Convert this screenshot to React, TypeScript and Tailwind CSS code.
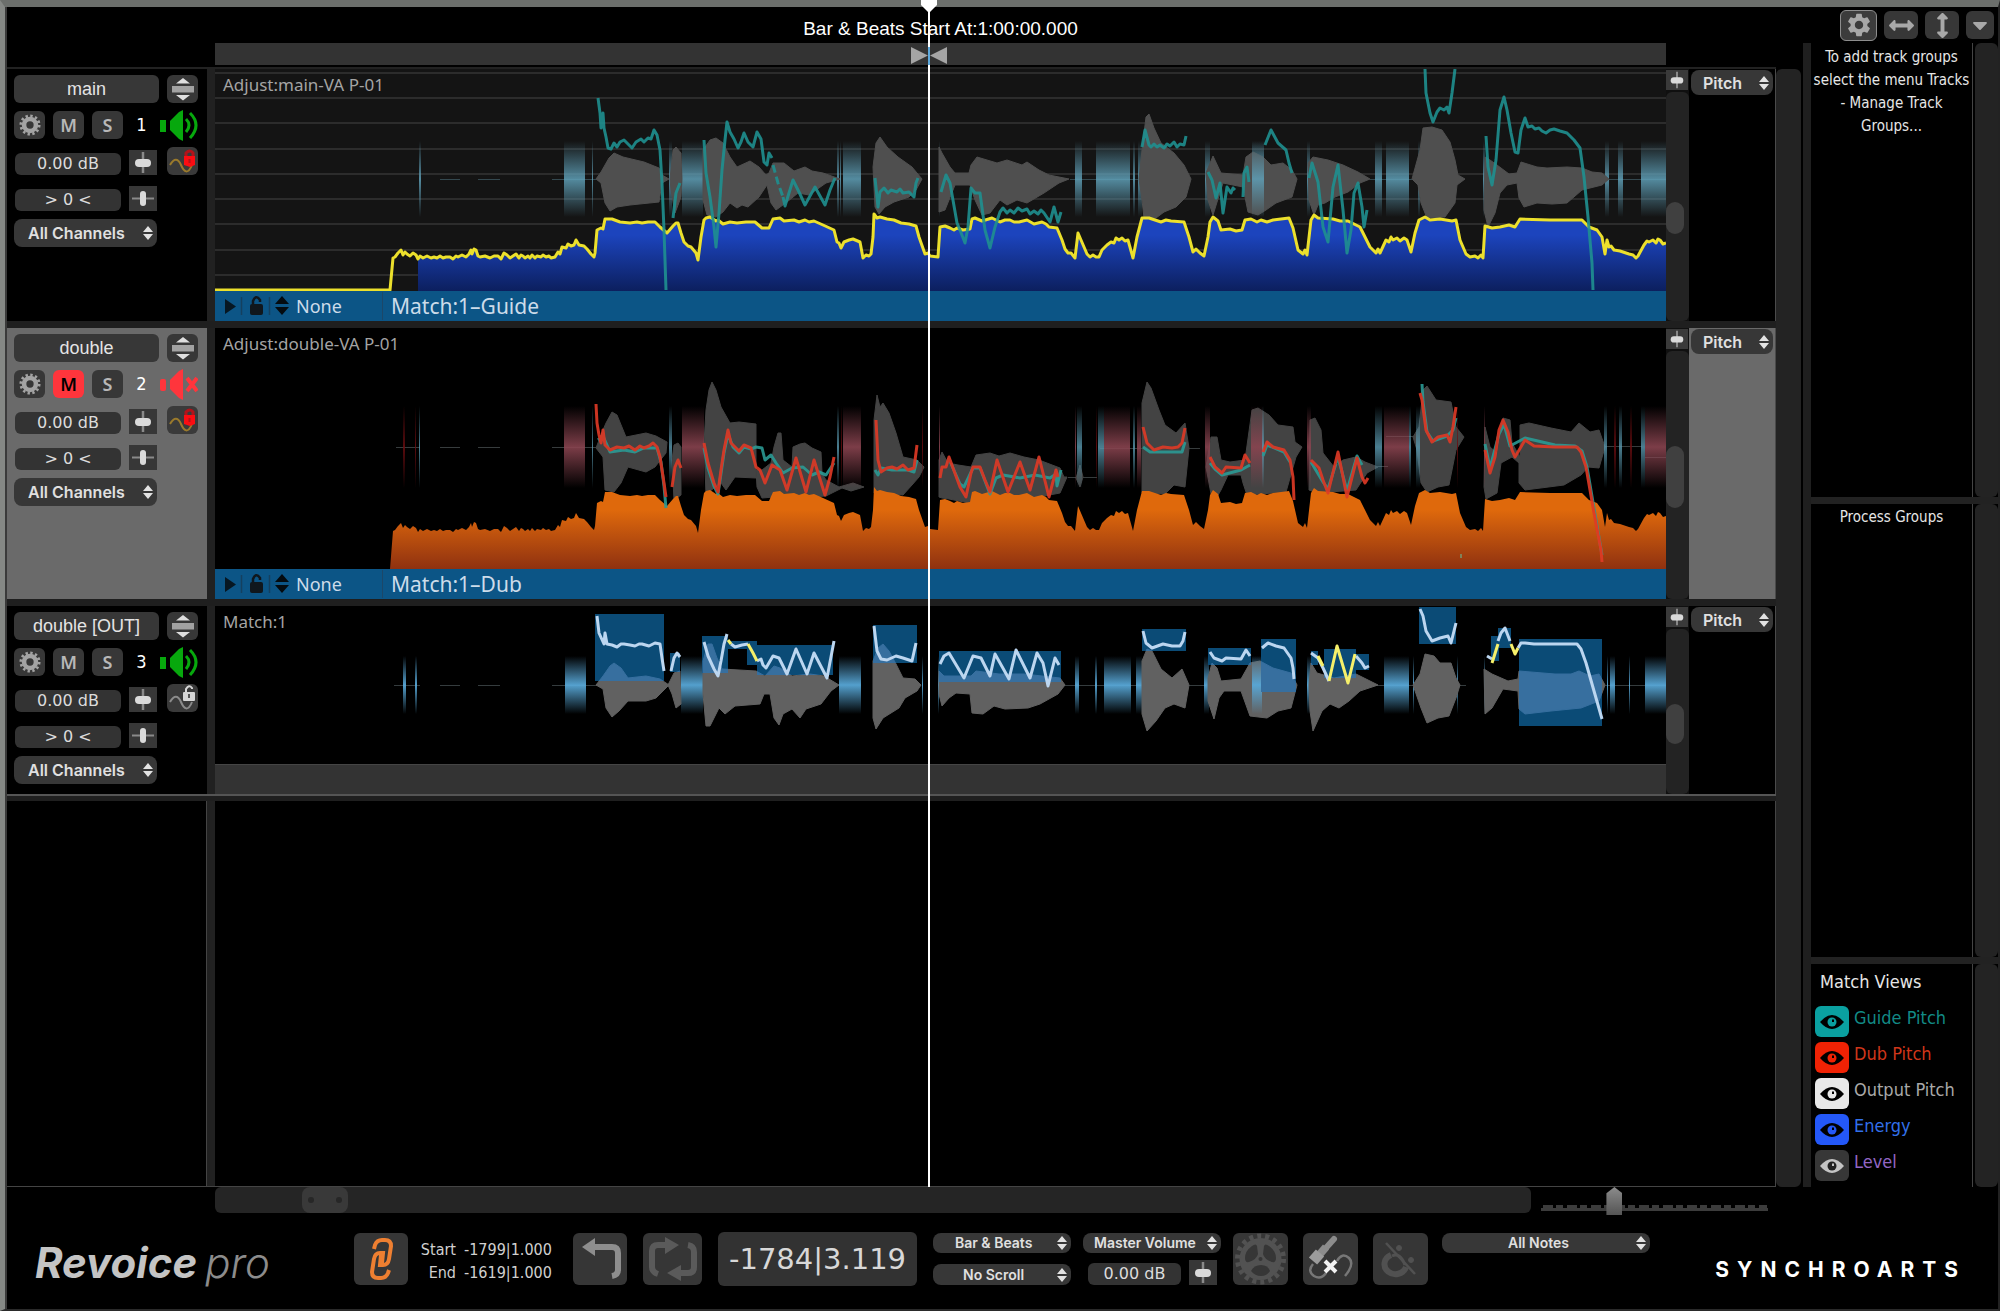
import React from "react";
import { FaArrowsAltH, FaArrowsAltV, FaCaretDown } from "react-icons/fa";
import { MdSettings } from "react-icons/md";

const uiFont = "font-['DejaVu_Sans_Condensed','DejaVu_Sans',sans-serif]";
const numFont = "font-['DejaVu_Sans',sans-serif]";
const labelFont = "font-['Noto_Sans',sans-serif]";
const boldFont = "font-['Inter',sans-serif]";

// Energy contour shared by the guide (line + fill) and the dub (fill)
const ENERGY =
  "393,258 395,257 398,253 401,250 403,255 405,252 407,254 410,256 413,253 416,255 418,259 420,256 423,258 427,256 431,258 434,257 437,258 440,256 443,258 446,257 450,257 453,259 456,256 458,257 462,255 466,257 469,254 471,250 472,254 474,249 476,250 478,256 480,257 485,256 490,258 494,256 498,256 501,259 504,253 507,255 510,258 513,256 516,254 519,258 521,255 523,256 525,258 528,256 530,258 532,255 535,258 537,256 541,257 543,255 546,257 549,256 551,258 555,257 558,252 560,254 562,247 566,248 568,244 571,246 574,245 576,240 579,245 584,246 587,249 591,254 594,257 595,253 597,230 601,228 603,229 605,219 612,219 620,222 630,223 637,222 642,223 648,222 655,222 660,227 667,233 673,226 676,223 678,223 681,233 684,242 688,246 691,247 696,253 698,260 701,237 704,220 706,218 710,217 716,221 718,220 723,224 730,222 737,223 746,222 755,222 762,228 769,228 773,219 780,218 784,221 794,220 799,222 805,220 809,222 814,221 823,225 834,230 837,242 839,243 841,248 844,242 849,240 853,239 860,242 863,258 866,255 869,256 871,254 873,237 874,214 877,218 880,217 887,219 894,220 901,223 909,224 916,226 919,237 925,254 928,253 930,256 938,257 940,227 945,226 950,228 954,230 957,228 963,230 970,229 972,219 975,218 982,221 992,218 1000,222 1005,220 1010,220 1014,222 1019,222 1027,220 1034,224 1042,222 1046,224 1049,227 1057,228 1062,240 1065,249 1068,253 1071,253 1075,258 1078,233 1087,254 1090,257 1093,255 1096,257 1099,257 1102,250 1107,245 1111,242 1114,243 1116,238 1119,240 1122,238 1125,241 1128,240 1133,258 1137,237 1142,218 1149,218 1155,220 1161,222 1166,220 1171,221 1184,222 1189,237 1193,252 1196,249 1200,253 1204,256 1208,237 1210,222 1213,217 1218,221 1221,230 1230,229 1236,231 1242,230 1245,220 1251,219 1257,222 1261,220 1267,222 1273,220 1289,218 1293,228 1298,250 1303,254 1305,250 1307,255 1311,220 1314,215 1318,218 1333,219 1340,221 1348,221 1360,227 1365,237 1370,247 1376,253 1378,249 1380,253 1386,240 1389,242 1391,237 1393,240 1397,238 1400,241 1404,238 1407,240 1411,252 1415,233 1419,220 1425,217 1430,220 1440,219 1452,221 1456,220 1460,240 1466,254 1470,257 1475,256 1478,258 1481,255 1483,258 1485,226 1492,228 1500,227 1509,225 1515,227 1520,219 1550,220 1582,220 1589,227 1597,230 1602,237 1605,254 1607,240 1609,247 1611,246 1614,250 1620,251 1629,254 1633,255 1636,258 1638,256 1644,245 1647,241 1649,242 1653,240 1656,243 1658,239 1660,240 1663,244 1666,243";

const GUIDE_WAVES = [
  "596,179 601,172 609,158 614,153 623,157 644,162 659,168 662,175 669,179 662,183 659,202 630,205 617,207 610,211 605,203 601,183",
  "670,179 673,150 676,147 681,153 682,179 681,197 675,213 671,190",
  "703,150 710,140 716,138 723,143 730,157 737,167 750,161 759,167 766,175 769,173 773,163 784,163 794,171 805,167 812,171 823,173 840,179 826,183 809,195 798,193 787,202 776,210 771,203 767,185 759,197 748,207 742,205 737,208 730,203 723,212 716,217 707,215 703,200",
  "873,167 876,143 880,137 887,147 898,157 912,167 917,173 922,179 916,190 909,197 894,202 885,207 879,214 875,207",
  "939,147 942,153 950,167 955,173 969,173 971,165 977,157 997,163 1007,160 1022,165 1027,162 1039,170 1049,175 1069,179 1059,183 1044,193 1027,203 1017,200 1007,205 1000,200 990,213 982,215 975,200 970,185 955,185 945,210 939,212",
  "1139,179 1142,150 1146,117 1149,114 1154,128 1161,143 1174,153 1184,165 1189,175 1191,179 1186,197 1176,207 1164,212 1156,218 1144,218 1142,200",
  "1206,173 1213,156 1221,173 1243,175 1246,157 1253,152 1263,157 1271,165 1283,163 1292,170 1297,179 1292,197 1276,203 1266,210 1258,215 1248,212 1243,187 1223,183 1213,215 1208,200",
  "1308,163 1313,157 1328,160 1343,165 1358,172 1370,179 1360,183 1348,192 1335,197 1325,203 1318,205 1314,215 1309,200",
  "1412,179 1420,150 1423,128 1432,127 1442,130 1450,142 1455,160 1458,175 1465,179 1457,185 1455,203 1445,217 1427,218 1421,203 1418,185",
  "1485,157 1490,160 1497,165 1509,174 1517,173 1521,162 1537,167 1547,168 1567,167 1582,168 1592,172 1602,173 1609,179 1602,185 1582,190 1567,203 1552,204 1537,203 1524,207 1519,198 1517,183 1507,185 1500,193 1495,213 1488,227 1484,210",
];

const GUIDE_PITCH = [
  "598,98 600,113 601,128 603,113 604,128 606,137 608,148 611,149 614,143 617,147 620,142 624,140 628,144 632,148 636,142 641,139 644,142 648,138 651,139 654,130 657,135 660,150 662,183 664,230 666,290",
  "673,218 676,193 680,183",
  "704,140 706,173 710,197 714,227 716,247 719,213 722,170 725,140 727,122 730,132 734,139 738,148 741,142 744,133 748,142 753,147 757,132 761,139 764,162 767,165 769,153 772,158",
  "783,197 785,206 793,180 799,192 805,205 815,187 825,205 830,190 835,178",
  "875,178 878,207 880,192 884,188 888,193 891,190 897,192 900,189 903,193 909,192 914,197 916,183 918,178",
  "941,192 946,175 950,183 957,223 960,230 965,243 968,227 971,188 975,193 980,193 985,230 990,248 995,227 1000,212 1003,208 1007,213 1010,210 1014,213 1018,208 1022,211 1027,209 1030,214 1034,211 1038,214 1041,210 1044,213 1050,222 1054,207 1058,222 1061,212",
  "1142,147 1145,130 1149,145 1151,147 1154,144 1157,147 1160,145 1164,148 1167,144 1170,146 1174,142 1177,147 1180,144 1184,145 1186,136",
  "1208,172 1212,180 1216,198 1220,183 1223,213 1227,187 1231,193 1233,188 1235,190",
  "1243,197 1244,173 1247,167 1249,182",
  "1265,145 1271,130 1278,143 1286,150 1289,163 1292,173",
  "1309,178 1312,163 1318,182 1323,227 1328,242 1333,187 1338,165 1343,210 1347,253 1351,230 1354,193 1358,183 1362,207 1364,227 1367,210",
  "1425,69 1426,93 1430,113 1433,122 1437,112 1440,108 1444,110 1447,107 1449,113 1452,93 1455,69",
  "1486,136 1488,167 1492,185 1496,160 1500,110 1504,97 1507,110 1511,133 1515,152 1518,153 1521,130 1525,118 1528,127 1532,126 1535,129 1539,128 1542,131 1546,133 1550,130 1554,129 1560,131 1567,133 1574,140 1580,148 1584,177 1588,217 1592,263 1593,290",
];

const DUB_WAVES = [
  "596,448 603,430 606,423 612,412 617,415 626,437 646,433 656,436 667,442 666,453 655,467 646,472 628,467 621,483 614,492 605,490 603,457",
  "672,460 674,445 678,443 681,447 681,495 674,500",
  "704,443 706,410 709,390 712,382 716,390 721,407 730,423 739,422 756,424 756,478 735,477 726,490 721,483 706,494",
  "756,470 762,470 771,463 774,447 778,433 781,433 783,460 792,467 793,447 800,444 805,443 812,448 821,452 822,473 826,480 839,487 853,483 864,487 851,491 842,488 826,496 810,497 774,497 762,498 757,487",
  "874,493 874,420 877,395 880,407 883,403 889,413 896,433 903,457 917,460 924,467 919,477 912,485 903,495",
  "939,497 939,460 942,452 948,463 958,465 971,467 976,455 990,453 999,456 1010,453 1024,457 1039,460 1060,468 1064,477 1067,477 1060,493 1039,497 974,497 969,503 949,499 942,498",
  "1076,478 1080,465 1083,477 1080,487",
  "1142,493 1142,403 1147,382 1151,388 1159,410 1165,425 1176,433 1185,423 1189,448 1185,487 1174,485 1165,494",
  "1206,467 1211,437 1217,437 1221,460 1230,462 1245,460 1252,410 1258,408 1269,415 1278,425 1293,427 1295,442 1302,447 1296,457 1286,492 1247,495 1243,483 1241,475 1228,475 1221,490 1217,497 1211,494",
  "1309,490 1310,420 1315,418 1321,430 1323,453 1334,467 1343,460 1356,457 1365,462 1378,467 1367,473 1356,490 1317,493",
  "1413,437 1419,427 1423,390 1427,386 1436,400 1451,402 1456,427 1464,437 1456,450 1449,485 1438,487 1427,492 1421,483 1417,450",
  "1484,487 1485,427 1490,447 1497,453 1501,427 1503,418 1510,420 1512,443 1520,457 1520,425 1529,423 1551,428 1571,432 1579,423 1590,432 1599,430 1605,447 1599,468 1588,467 1581,475 1564,485 1525,490 1519,483 1519,463 1512,457 1501,463 1497,493 1486,499",
];

const DUB_PITCH = [
  "596,404 597,423 599,435 601,443 603,430 605,445 610,450 617,447 624,448 629,446 635,450 640,446 644,448 649,446 653,443 657,447 660,457 664,483 666,497",
  "672,487 675,467 678,460 681,468",
  "704,443 708,463 714,483 718,492 721,470 724,450 728,430 731,443 739,451 744,445 751,448 756,467 760,470 765,483 772,465 780,470 787,490 796,458 806,492 814,460 825,495 830,477 834,457",
  "876,420 878,460 881,472 887,468 892,467 897,469 903,465 908,470 914,468 917,445",
  "940,478 942,467 946,467 949,457 953,468 960,487 966,497 971,473 973,467 980,467 985,480 990,492 997,460 1008,492 1020,462 1030,490 1039,457 1049,497 1056,470 1058,477",
  "1143,427 1147,443 1154,450 1163,447 1172,448 1178,447 1182,443 1185,428",
  "1210,457 1215,467 1222,473 1226,467 1241,468 1245,455 1250,463",
  "1263,452 1267,442 1273,447 1284,450 1290,460 1293,477 1294,500",
  "1311,460 1319,468 1323,480 1328,493 1338,452 1347,497 1357,458 1362,477 1365,483 1368,478",
  "1420,393 1422,400 1426,430 1432,442 1438,437 1447,435 1450,442 1453,427 1456,407",
  "1485,450 1490,473 1495,457 1499,430 1503,420 1508,432 1512,450 1515,457 1525,440 1534,446 1555,447 1577,447 1581,452 1586,467 1594,513 1601,550 1602,562",
];

const DUB_GUIDE_PITCH = [
  "598,440 603,436 610,452 624,450 635,452 644,448 657,448 661,462 664,486 666,508",
  "704,448 708,468 714,486 718,494 724,453 728,434 733,447 739,453 744,447 751,449 756,447 762,448 765,460 771,455 776,463 783,473 792,468 803,467 812,475 819,472 826,475 834,463",
  "875,470 878,475 881,468 892,470 908,470 914,472 917,460",
  "949,459 960,484 964,487 973,468 980,468 990,494 996,478 1003,475 1020,478 1035,475 1050,478 1056,474 1057,486 1061,470",
  "1143,447 1150,452 1163,452 1182,452 1185,442",
  "1210,463 1215,469 1222,475 1241,470 1250,465",
  "1263,456 1267,445 1284,452 1290,462",
  "1311,462 1323,482 1328,489 1338,457 1347,491 1357,456 1362,465",
  "1422,384 1423,402 1427,432 1433,441 1447,436 1453,430 1456,418",
  "1485,444 1490,468 1499,434 1504,424 1510,446 1525,438 1555,445 1575,446 1582,451 1587,467 1602,555",
];

const OUT_WAVES = [
  "596,684 603,675 610,665 614,662 621,667 628,677 646,675 660,678 669,684 656,697 646,700 628,700 619,710 612,716 606,707 603,688",
  "668,684 674,672 680,670 681,703 676,707 672,693",
  "703,660 708,643 712,643 717,657 722,668 756,670 765,675 774,665 780,667 792,675 810,673 824,675 839,684 831,690 821,703 806,708 800,717 792,708 783,713 779,724 774,717 770,693 764,693 760,703 735,705 725,713 719,707 710,725 706,725 703,693",
  "873,660 878,647 883,643 889,650 896,663 903,677 915,678 921,684 917,690 905,697 899,707 883,717 876,728 873,717",
  "939,670 944,675 971,675 976,670 999,673 1024,673 1060,677 1065,684 1058,693 1040,703 1028,707 1005,708 994,705 983,713 972,712 970,693 956,692 949,697 942,705 939,693",
  "1142,660 1147,648 1152,650 1161,668 1172,677 1182,668 1189,684 1185,707 1174,703 1165,707 1156,720 1147,730 1142,713",
  "1208,677 1212,662 1217,667 1221,680 1241,678 1250,662 1260,660 1273,667 1291,672 1297,684 1291,707 1278,710 1267,717 1250,715 1241,690 1224,690 1219,697 1214,718 1208,700",
  "1309,684 1311,662 1317,672 1334,677 1356,673 1378,684 1360,690 1349,700 1339,707 1330,703 1322,710 1313,730 1310,710",
  "1413,684 1420,673 1425,653 1434,655 1440,662 1451,662 1456,677 1460,684 1456,697 1449,715 1438,717 1427,722 1421,707",
  "1484,668 1492,673 1508,680 1518,678 1519,670 1555,673 1571,673 1579,670 1590,675 1599,673 1605,684 1599,700 1581,707 1551,710 1525,713 1519,708 1518,690 1503,688 1492,707 1485,713",
];

const OUT_PITCH = [
  "597,615 599,632 604,643 605,632 607,643 612,644 617,646 621,643 624,643 630,644 635,645 639,643 642,643 649,645 655,642 660,643 662,657 664,670",
  "671,670 674,657 677,652 680,656",
  "704,641 708,655 714,668 718,675 721,660 724,643 727,633",
  "731,643 735,646 742,644 748,643",
  "757,660 761,658 763,664 766,667 773,655 779,657 787,673 796,648 807,673 814,652 827,677 834,640",
  "874,625 877,650 881,658 887,659 896,655 903,657 912,660 916,642",
  "940,663 944,655 949,652 964,677 973,655 981,657 990,675 995,653 1009,678 1016,649 1030,677 1037,652 1043,662 1048,685 1055,657 1059,664",
  "1143,630 1146,642 1152,647 1163,643 1172,645 1180,645 1183,640 1185,631",
  "1210,651 1214,657 1222,660 1226,657 1241,658 1246,649 1250,655",
  "1262,647 1268,642 1276,645 1284,647 1291,657 1293,667 1294,678",
  "1311,652 1318,657 1323,667 1329,680",
  "1356,655 1362,662 1365,667 1369,665",
  "1420,608 1423,615 1426,630 1432,640 1440,637 1448,635 1451,642 1456,622",
  "1487,655 1492,658",
  "1498,640 1501,632 1505,627 1510,640",
  "1518,647 1521,642 1525,642 1534,643 1577,643 1581,648 1586,662 1602,718",
];

const OUT_EDITED = [
  "728,639 731,643",
  "748,643 753,652 757,660",
  "1318,655 1323,665",
  "1329,680 1337,645 1348,682 1355,653",
  "1492,662 1498,643",
  "1511,643 1515,653 1518,647",
];

// x1, y1, x2, y2
const NOTE_BOXES = [
  [595, 613, 664, 680],
  [670, 652, 680, 671],
  [702, 635, 728, 672],
  [728, 640, 747, 648],
  [747, 640, 757, 664],
  [757, 644, 833, 674],
  [873, 624, 917, 662],
  [939, 650, 1061, 681],
  [1142, 628, 1186, 650],
  [1208, 647, 1251, 664],
  [1261, 638, 1296, 691],
  [1311, 650, 1318, 664],
  [1324, 648, 1356, 677],
  [1356, 653, 1369, 669],
  [1419, 606, 1456, 643],
  [1491, 635, 1499, 660],
  [1498, 627, 1511, 647],
  [1519, 638, 1602, 725],
];

// unvoiced regions: x, width
const GUIDE_BARS = [
  [419, 2], [564, 21], [592, 1], [669, 3], [682, 21], [837, 2], [840, 1], [843, 18], [939, 1],
  [1075, 7], [1096, 34], [1133, 2], [1138, 4], [1205, 5], [1252, 12], [1307, 3], [1375, 7],
  [1386, 23], [1418, 2], [1483, 2], [1605, 4], [1618, 5], [1641, 25],
];
const DUB_RED_BARS = [
  [564, 21], [682, 22], [843, 18], [939, 1], [1075, 1], [1104, 26], [1137, 4], [1205, 5],
  [1251, 12], [1307, 4], [1384, 25], [1484, 1], [1645, 21],
];
const DUB_DARK_BARS = [
  [403, 2], [415, 1], [841, 1], [922, 1], [1096, 1], [1457, 1], [1614, 2], [1630, 2],
];
const DUB_BLUE_BARS = [
  [419, 1], [592, 1], [669, 3], [837, 2], [1077, 5], [1098, 6], [1133, 2], [1262, 2], [1375, 7],
  [1409, 2], [1416, 4], [1604, 3], [1619, 3], [1641, 4],
];
const OUT_BARS = [
  [403, 3], [415, 2], [565, 21], [681, 22], [839, 22], [922, 1], [938, 1], [1075, 4], [1095, 2],
  [1104, 27], [1136, 6], [1204, 5], [1252, 10], [1307, 4], [1384, 25], [1413, 1], [1457, 1],
  [1484, 1], [1607, 1], [1610, 5], [1629, 1], [1645, 21],
];

const Bars = ({ data, y, h, fill }: { data: number[][]; y: number; h: number; fill: string }) => (
  <g fill={`url(#${fill})`}>
    {data.map(([x, w]) => (
      <rect key={x} x={x} y={y} width={w} height={h} />
    ))}
  </g>
);

const Waves = ({ data, fill }: { data: string[]; fill: string }) => (
  <g fill={fill} stroke={fill} strokeWidth="1" strokeLinejoin="round">
    {data.map((p) => (
      <polygon key={p} points={p} />
    ))}
  </g>
);

const Lines = ({ data, stroke, width = 3 }: { data: string[]; stroke: string; width?: number }) => (
  <g fill="none" stroke={stroke} strokeWidth={width} strokeLinejoin="round">
    {data.map((p) => (
      <polyline key={p} points={p} />
    ))}
  </g>
);

const Fade = ({ id, color, peak = 0.85 }: { id: string; color: string; peak?: number }) => (
  <linearGradient id={id} x1="0" y1="0" x2="0" y2="1">
    <stop offset="0" stopColor={color} stopOpacity="0" />
    <stop offset="0.5" stopColor={color} stopOpacity={peak} />
    <stop offset="1" stopColor={color} stopOpacity="0" />
  </linearGradient>
);

const GuidePlot = () => (
  <svg viewBox="215 69 1451 222" preserveAspectRatio="none" className="block h-[222px] w-full bg-[#141414]">
    <defs>
      <Fade id="guideBar" color="#5fa0b8" />
      <linearGradient id="energyBlue" gradientUnits="userSpaceOnUse" x1="0" y1="235" x2="0" y2="291">
        <stop offset="0" stopColor="#1c44bd" />
        <stop offset="1" stopColor="#0c1f5e" />
      </linearGradient>
    </defs>
    {[72, 97, 122, 148, 173, 198, 223, 249, 274].map((y) => (
      <rect key={y} x="215" y={y} width="1451" height="2" fill="#2c2c2c" />
    ))}
    <path d="M440 179.500H460M478 179.500H500M552 179.500H596M1070 179.500H1140M1370 179.500H1415M1609 179.500H1666" stroke="#5b8796" strokeOpacity="0.45" />
    <Bars data={GUIDE_BARS} y={141} h={76} fill="guideBar" />
    <Waves data={GUIDE_WAVES} fill="#4f4f4f" />
    <rect x="1252" y="141" width="12" height="76" fill="url(#guideBar)" />
    <svg x="418" y="69" width="1248" height="222" viewBox="418 69 1248 222">
      <polygon points={`390,291 ${ENERGY} 1666,291`} fill="url(#energyBlue)" />
    </svg>
    <Lines data={[`215,290 390,290 ${ENERGY}`]} stroke="#ece02c" />
    <g opacity="0.9">
      <Lines data={GUIDE_PITCH} stroke="#1f9090" />
      <polyline points="773,165 778,183 783,197" fill="none" stroke="#1f9090" strokeWidth="3" strokeDasharray="8 4" />
    </g>
  </svg>
);

const DubPlot = () => (
  <svg viewBox="215 328 1451 241" preserveAspectRatio="none" className="block h-[241px] w-full bg-black">
    <defs>
      <Fade id="dubRed" color="#8a4450" peak={0.9} />
      <Fade id="dubDark" color="#6a0d10" />
      <Fade id="dubBlue" color="#5794aa" />
      <linearGradient id="energyOrange" gradientUnits="userSpaceOnUse" x1="0" y1="237" x2="0" y2="296">
        <stop offset="0" stopColor="#df690c" />
        <stop offset="1" stopColor="#8f3110" />
      </linearGradient>
    </defs>
    <path d="M396 447.500H420M440 447.500H460M478 447.500H500M552 447.500H596M1068 477.500H1097M1100 448.500H1142M1189 448.500H1200M1378 466.500H1388M1386 436.500H1415M1605 446.500H1642M1645 457.500H1666" stroke="#6d7779" strokeOpacity="0.5" />
    <Waves data={DUB_WAVES} fill="#434343" />
    <Bars data={DUB_RED_BARS} y={406} h={82} fill="dubRed" />
    <Bars data={DUB_DARK_BARS} y={406} h={82} fill="dubDark" />
    <Bars data={DUB_BLUE_BARS} y={406} h={82} fill="dubBlue" />
    <g transform="translate(0 273)">
      <polygon points={`390,296 ${ENERGY} 1666,296`} fill="url(#energyOrange)" />
    </g>
    <g opacity="0.9">
      <Lines data={DUB_GUIDE_PITCH} stroke="#2b9a94" />
      <Lines data={DUB_PITCH} stroke="#e03a26" />
      <rect x="1460" y="554" width="2" height="4" fill="#7d8a63" />
    </g>
  </svg>
);

const OutputPlot = () => (
  <svg viewBox="215 605 1451 158" preserveAspectRatio="none" className="block h-[158px] w-full bg-black">
    <defs>
      <Fade id="outBar" color="#58a8d8" peak={0.95} />
      <clipPath id="noteClip">
        {NOTE_BOXES.map(([x1, y1, x2, y2]) => (
          <rect key={x1} x={x1} y={y1} width={x2 - x1} height={y2 - y1} />
        ))}
      </clipPath>
    </defs>
    <path d="M394 684.500H420M440 684.500H460M478 684.500H500M552 684.500H670M1060 684.500H1142M1186 684.500H1206M1370 684.500H1420M1456 684.500H1466M1605 684.500H1666" stroke="#6a777c" strokeOpacity="0.5" />
    <Bars data={OUT_BARS} y={655} h={58} fill="outBar" />
    <Waves data={OUT_WAVES} fill="#616161" />
    <rect x="1252" y="655" width="10" height="58" fill="url(#outBar)" />
    {NOTE_BOXES.map(([x1, y1, x2, y2]) => (
      <rect key={x1} x={x1} y={y1} width={x2 - x1} height={y2 - y1} fill="#0b4b76" />
    ))}
    <g clipPath="url(#noteClip)">
      <Waves data={OUT_WAVES} fill="#376f9f" />
    </g>
    <Lines data={OUT_PITCH} stroke="#bcd6f0" />
    <Lines data={OUT_EDITED} stroke="#f6f06a" />
  </svg>
);

const Chevrons = ({ className = "" }: { className?: string }) => (
  <svg viewBox="0 0 10 14" className={`pointer-events-none absolute h-[14px] w-[10px] ${className}`}>
    <path d="M5 0l5 6H0zM5 14l5-6H0z" fill="#e2e2e2" />
  </svg>
);

interface DropdownProps {
  label: string;
  value: string;
  className: string;
  selectClassName: string;
}

const Dropdown: React.FC<DropdownProps> = ({ label, value, className, selectClassName }) => (
  <div className={`relative flex items-center ${className}`}>
    <select
      aria-label={label}
      className={`h-full w-full appearance-none bg-[#373737] font-semibold text-[#e0e0e0] ${boldFont} ${selectClassName}`}
    >
      <option>{value}</option>
    </select>
    <Chevrons className="right-1" />
  </div>
);

const FaderIcon = ({ vertical = false }: { vertical?: boolean }) => (
  <svg viewBox="0 0 28 25" className="block h-full w-full">
    {vertical ? (
      <>
        <path d="M3 12.500h22" stroke="#8a8a8a" strokeWidth="2" />
        <rect x="11" y="5" width="6" height="15" rx="3" fill="#dadada" />
      </>
    ) : (
      <>
        <path d="M14 2v21" stroke="#8a8a8a" strokeWidth="2.500" />
        <rect x="6" y="9" width="16" height="8" rx="4" fill="#dadada" />
      </>
    )}
  </svg>
);

const Sprocket = () => (
  <svg viewBox="0 0 24 24" className="h-[22px] w-[22px]" fill="none" stroke="#a3a3a3">
    <circle cx="12" cy="12" r="6.500" strokeWidth="5" />
    <circle cx="12" cy="12" r="10" strokeWidth="3" strokeDasharray="2.600 2.636" />
  </svg>
);

const Speaker = ({ muted }: { muted: boolean }) => (
  <svg viewBox="0 0 38 31" className="h-[31px] w-[38px]">
    <g fill={muted ? "#ff353c" : "#07a80d"}>
      <rect x="0" y="10" width="6" height="12" rx={muted ? 2 : 0} />
      <path d="M10 11l9-9 4-2v31l-4-2-9-9z" />
    </g>
    {muted ? (
      <path d="M27 9l10 13M37 9L27 22" stroke="#ff353c" strokeWidth="4" fill="none" />
    ) : (
      <path d="M26 9q6 6 0 13M30 3q12 12 0 25" stroke="#07a80d" strokeWidth="3" fill="none" />
    )}
  </svg>
);

const CurveLock = ({ locked }: { locked: boolean }) => (
  <svg viewBox="0 0 31 28" className="h-7 w-[31px]">
    <path d="M3 18c4-7 8-7 11 0s7 10 11 0" stroke={locked ? "#9a7a2c" : "#8b8b8b"} strokeWidth="2" fill="none" />
    {locked ? (
      <>
        <path d="M19 10V6q4-4 7 0v4" stroke="#b3121a" strokeWidth="3" fill="none" />
        <path d="M17 9h11v9l-5 2-6-2z" fill="#fb0d12" />
        <path d="M22.500 12v4" stroke="#b3121a" strokeWidth="2" />
      </>
    ) : (
      <>
        <path d="M19 8V5q3-5 6-1v1" stroke="#d6d6d6" strokeWidth="2" fill="none" />
        <rect x="16" y="8" width="12" height="9" rx="1" fill="#d6d6d6" />
        <path d="M22 10v4" stroke="#555" strokeWidth="2" />
      </>
    )}
  </svg>
);

interface ITrack {
  name: string;
  num: number;
  muted: boolean;
  locked: boolean;
  title: string;
  clip?: string;
  height: string;
  thumb: string;
  plot: React.ReactNode;
}

const TrackControls = ({ track }: { track: ITrack }) => {
  const small = "flex h-7 w-[31px] items-center justify-center rounded-md bg-[#373737]";
  const field = `h-[22px] w-[106px] rounded-md bg-[#333] text-center text-base text-[#dcdcdc] ${numFont}`;
  return (
    <div className={`w-[200px] shrink-0 pt-[6px] pl-[7px] ${track.muted ? "bg-[#6a6a6a]" : "bg-black"}`}>
      <div className="flex gap-2">
        <button className="h-7 w-[145px] rounded-md bg-[#373737] font-['Liberation_Sans',sans-serif] text-lg leading-7 text-[#e4e4e4]">
          {track.name}
        </button>
        <button aria-label="Track height" className={small}>
          <svg viewBox="0 0 22 24" className="h-6 w-[22px]">
            <path d="M4 6.500L11 1l7 5.500zM4 18l7 5.500 7-5.500z" fill="#dedede" />
            <rect x="0" y="9" width="22" height="6.500" fill="#a2a2a2" />
          </svg>
        </button>
      </div>
      <div className="mt-2 flex h-7 items-center">
        <button aria-label="Track settings" className={small}>
          <Sprocket />
        </button>
        <button
          aria-label="Mute"
          className={`ml-2 flex h-7 w-[31px] items-center justify-center rounded-md text-lg font-semibold ${labelFont} ${
            track.muted ? "bg-[#ff353c] text-black" : "bg-[#373737] text-[#b8b8b8]"
          }`}
        >
          M
        </button>
        <button aria-label="Solo" className={`ml-2 text-lg font-semibold text-[#b8b8b8] ${labelFont} ${small}`}>
          S
        </button>
        <span className={`w-[37px] text-center text-lg text-white ${uiFont}`}>{track.num}</span>
        <Speaker muted={track.muted} />
      </div>
      <div className="mt-2 flex h-7 items-end">
        <input aria-label="Level" defaultValue="0.00 dB" className={`ml-px ${field}`} />
        <button aria-label="Level fader" className="ml-2 h-[25px] w-7 bg-[#373737]">
          <FaderIcon />
        </button>
        <button aria-label="Pitch lock" className="ml-2.5 h-7 w-[31px] rounded-md bg-[#3a3a3a]">
          <CurveLock locked={track.locked} />
        </button>
      </div>
      <div className="mt-[11px] flex h-[25px] items-end">
        <input aria-label="Pan" defaultValue="> 0 <" className={`ml-px ${field}`} />
        <button aria-label="Pan fader" className="ml-2 h-[25px] w-7 bg-[#373737]">
          <FaderIcon vertical />
        </button>
      </div>
      <Dropdown
        label="Channels"
        value="All Channels"
        className="mt-2 h-7 w-[143px]"
        selectClassName="rounded-lg pl-[14px] text-base"
      />
    </div>
  );
};

const ClipBar = ({ name }: { name: string }) => (
  <div className={`flex flex-1 items-center bg-[#0c5586] leading-7 text-[#ccdcea] ${labelFont}`}>
    <svg viewBox="0 0 78 28" className="h-7 w-[78px] shrink-0">
      <path d="M10 7l11 7.500L10 22z" fill="#071722" />
      <path d="M26.500 5v18M54.500 5v18" stroke="#14405f" strokeWidth="1.500" />
      <rect x="35" y="12" width="13" height="11" rx="2" fill="#10171d" />
      <path d="M38 12V9q3-7 7-1v2" stroke="#10171d" strokeWidth="2.500" fill="none" />
      <path d="M60 12l7-8 7 8zM60 15l7 8 7-8z" fill="#040b10" />
    </svg>
    <span className="w-[89px] pl-[3px] text-lg leading-7">None</span>
    <span className="border-l border-[#1c4768] pl-2 text-[21px] leading-7">{name}</span>
  </div>
);

const TrackRow = ({ track }: { track: ITrack }) => (
  <div className={`flex border-b-[7px] border-[#1f1f1f] last:border-b-0 ${track.height}`}>
    <TrackControls track={track} />
    <div className="w-2 shrink-0 bg-[#212121]" />
    <div className="relative flex min-w-0 flex-1 flex-col">
      <h2 className={`absolute top-1 left-2 text-[17px] leading-6 text-[#a4a4a4] ${labelFont}`}>{track.title}</h2>
      {track.plot}
      {track.clip ? <ClipBar name={track.clip} /> : <div className="flex-1 border-t border-[#454545] bg-[#333]" />}
    </div>
    <div className="flex w-[23px] shrink-0 flex-col bg-[#101010]">
      <button aria-label="Vertical zoom" className="mt-px h-5 w-[22px] bg-[#3a3a3a]">
        <FaderIcon />
      </button>
      <div className="mt-0.5 flex-1 rounded-md bg-[#232323]">
        <div className={`w-[18px] rounded-full bg-[#404040] ${track.thumb}`} />
      </div>
    </div>
    <div className={`w-[87px] shrink-0 border-r border-[#4a4a4a] pt-px pl-0.5 ${track.muted ? "bg-[#6a6a6a]" : "bg-black"}`}>
      <Dropdown label="View" value="Pitch" className="h-[25px] w-[82px]" selectClassName="rounded-lg pl-3 text-base" />
    </div>
  </div>
);

const tracks: ITrack[] = [
  {
    name: "main",
    num: 1,
    muted: false,
    locked: true,
    title: "Adjust:main-VA P-01",
    clip: "Match:1–Guide",
    height: "h-[259px]",
    thumb: "mt-[110px] h-8",
    plot: <GuidePlot />,
  },
  {
    name: "double",
    num: 2,
    muted: true,
    locked: true,
    title: "Adjust:double-VA P-01",
    clip: "Match:1–Dub",
    height: "h-[278px]",
    thumb: "mt-[95px] h-[62px]",
    plot: <DubPlot />,
  },
  {
    name: "double [OUT]",
    num: 3,
    muted: false,
    locked: false,
    title: "Match:1",
    height: "h-[188px]",
    thumb: "mt-[75px] h-10",
    plot: <OutputPlot />,
  },
];

const Playhead = () => (
  <div className="pointer-events-none absolute -top-[7px] bottom-0 left-[calc(208px+(100%-318px)*0.4915)] z-10 flex w-px justify-center">
    <div className="w-0.5 shrink-0 bg-white" />
    <svg viewBox="0 0 36 66" className="absolute top-0 h-[66px] w-9">
      <path d="M10 0h16v5l-8 8-8-8z" fill="#fff" />
      <path d="M0 47l17 8.500L0 64zM36 47l-17 8.500L36 64z" fill="#a5a5a5" />
      <path d="M18 47v18" stroke="#5ea9dc" strokeWidth="2" />
    </svg>
  </div>
);

const Timeline = () => (
  <div className="relative flex min-w-0 flex-1 flex-col">
    <header className="ml-[208px] mr-[110px] h-[60px]">
      <h1 className="flex h-9 items-end justify-center pb-0.5 font-['Liberation_Sans',sans-serif] text-[19px] leading-6 text-white">
        Bar &amp; Beats Start At:1:00:00.000
      </h1>
      <div className="h-[22px] bg-[#333]" />
    </header>
    <div className="border-t-2 border-[#222]">
      {tracks.map((t) => (
        <TrackRow key={t.num} track={t} />
      ))}
    </div>
    <div className="h-[7px] border-t-2 border-[#555] bg-[#1f1f1f]" />
    <div className="flex flex-1 border-r border-b border-[#444]">
      <div className="w-[200px] border-r border-[#444]" />
      <div className="w-2 bg-[#212121]" />
    </div>
    <Playhead />
  </div>
);

const EyeIcon = ({ fg, bg }: { fg: string; bg: string }) => (
  <svg viewBox="0 0 24 14" className="h-3.5 w-6">
    <path d="M0 7q12-14 24 0-12 14-24 0z" fill={fg} />
    <circle cx="12" cy="7" r="4.500" fill={fg === "#000" ? bg : "#222"} />
    <path d="M13 7V4.500" stroke={fg} strokeWidth="2" />
  </svg>
);

const views = [
  { name: "Guide Pitch", box: "bg-[#0aa0a0]", text: "text-[#128a86]", bg: "#0aa0a0", fg: "#000" },
  { name: "Dub Pitch", box: "bg-[#f02204]", text: "text-[#d0361a]", bg: "#f02204", fg: "#000" },
  { name: "Output Pitch", box: "bg-[#e8e8e8]", text: "text-[#a8a8a8]", bg: "#e8e8e8", fg: "#000" },
  { name: "Energy", box: "bg-[#2458f8]", text: "text-[#3270ea]", bg: "#2458f8", fg: "#000" },
  { name: "Level", box: "bg-[#373737]", text: "text-[#9266c4]", bg: "#373737", fg: "#c4c4c4" },
];

const Side = ({ children, className }: { children: React.ReactNode; className: string }) => (
  <section className={`flex ${className}`}>
    <div className="w-[162px] shrink-0 border-r border-[#444] bg-black">{children}</div>
    <div className="ml-0.5 w-[23px] rounded-md bg-[#232323]" />
  </section>
);

const Sidebar = () => (
  <aside className={`flex w-[195px] shrink-0 flex-col text-[#e6e6e6] ${uiFont}`}>
    <div className="flex h-9 items-center justify-end gap-[7px] pr-1 text-[#a8a8a8]">
      <button aria-label="Settings" className="flex h-[31px] w-[37px] items-center justify-center rounded-md border border-[#8d8d8d] bg-[#3c3c3c]">
        <MdSettings size={28} />
      </button>
      <button aria-label="Fit width" className="flex h-7 w-[34px] items-center justify-center rounded-md bg-[#373737]">
        <FaArrowsAltH size={25} />
      </button>
      <button aria-label="Fit height" className="flex h-7 w-[34px] items-center justify-center rounded-md bg-[#373737]">
        <FaArrowsAltV size={25} />
      </button>
      <button aria-label="More" className="flex h-7 w-7 items-center justify-center rounded-md bg-[#373737]">
        <FaCaretDown size={24} />
      </button>
    </div>
    <div className="flex flex-1 flex-col border-l-8 border-[#1f1f1f]">
      <Side className="h-[454px]">
        <p className="pt-[3px] text-center text-[15px] leading-[23px]">
          To add track groups select the menu Tracks - Manage Track Groups...
        </p>
      </Side>
      <div className="h-[7px] bg-[#222]" />
      <Side className="flex-1">
        <p className="pt-0.5 text-center text-[15px] leading-[23px]">Process Groups</p>
      </Side>
      <div className="h-[7px] bg-[#222]" />
      <Side className="h-[223px]">
        <h2 className="mb-2.5 pt-1 pl-[9px] text-lg leading-7">Match Views</h2>
        <ul className="flex flex-col gap-[5px] pl-1">
          {views.map((v) => (
            <li key={v.name} className={`flex h-[31px] items-start gap-[5px] text-lg leading-6 ${v.text}`}>
              <button
                aria-label={`Show ${v.name}`}
                className={`flex h-[31px] w-[34px] shrink-0 items-center justify-center rounded-md ${v.box}`}
              >
                <EyeIcon fg={v.fg} bg={v.bg} />
              </button>
              <span className="whitespace-nowrap">{v.name}</span>
            </li>
          ))}
        </ul>
      </Side>
    </div>
  </aside>
);

const ScrollRow = () => (
  <div className="flex h-[26px] pl-[208px]">
    <div className="flex-1 rounded-md bg-[#252525]">
      <div className="ml-[87px] flex h-[26px] w-[46px] items-center justify-between rounded-lg bg-[#393939] px-1.5">
        <i className="h-1.5 w-1.5 rounded-full bg-[#272727]" />
        <i className="h-1.5 w-1.5 rounded-full bg-[#272727]" />
      </div>
    </div>
    <div className="relative mr-[230px] ml-2.5 w-[227px]">
      <svg viewBox="0 0 227 26" className="absolute inset-0 h-[26px] w-full">
        <path d="M2 19.500h224" stroke="#3c3c3c" strokeDasharray="10 3 7 4" strokeWidth="3" />
        <path d="M0 22.500h227" stroke="#3c3c3c" strokeWidth="3" />
      </svg>
      <input
        type="range"
        aria-label="Zoom"
        defaultValue={31}
        className="relative block h-7 w-full appearance-none bg-transparent [&::-webkit-slider-thumb]:h-7 [&::-webkit-slider-thumb]:w-4 [&::-webkit-slider-thumb]:appearance-none [&::-webkit-slider-thumb]:bg-linear-to-b [&::-webkit-slider-thumb]:from-[#8c8c8c] [&::-webkit-slider-thumb]:to-[#555] [&::-webkit-slider-thumb]:[clip-path:polygon(50%_0,100%_22%,100%_100%,0_100%,0_22%)]"
      />
    </div>
  </div>
);

const toolButton = "h-[52px] shrink-0 rounded-md bg-[#363636]";

const Toolbar = () => (
  <footer className="flex h-[96px] items-start pt-5 pl-7">
    <div className={`flex w-[319px] shrink-0 items-baseline gap-2 text-[42px] leading-[60px] italic ${boldFont}`}>
      <span className="font-bold text-[#c4c4c4]">Revoice</span>
      <span className="font-light text-[#8c8c8c]">pro</span>
    </div>
    <button aria-label="Link" className={`w-[54px] ${toolButton}`}>
      <svg viewBox="0 0 54 52" className="h-full w-full" fill="none" stroke="#ee7f31" strokeWidth="4">
        <path d="M20 16l1-4q2-5 7-5h3q6 0 6 6l-2 13q-1 6-6 6h-3l1-10" />
        <path d="M35 37l-1 3q-2 5-7 5h-3q-6 0-6-6l2-13q1-6 6-6h3l-1 10" />
      </svg>
    </button>
    <dl className={`ml-3 grid w-[130px] shrink-0 grid-cols-[36px_1fr] gap-x-2 pt-[5px] text-base leading-[23px] text-[#d0d0d0] ${uiFont}`}>
      <dt className="text-right">Start</dt>
      <dd className="whitespace-nowrap">-1799|1.000</dd>
      <dt className="text-right">End</dt>
      <dd className="whitespace-nowrap">-1619|1.000</dd>
    </dl>
    <button aria-label="Undo" className={`ml-[23px] w-[54px] ${toolButton}`}>
      <svg viewBox="0 0 54 52" className="h-full w-full">
        <path d="M9 14L22 5v18z" fill="#8e8e8e" />
        <path d="M20 14h19q6 0 6 6v17q0 5-6 6" stroke="#8e8e8e" strokeWidth="6" fill="none" />
      </svg>
    </button>
    <button aria-label="Loop" className={`ml-4 w-[59px] ${toolButton}`}>
      <svg viewBox="0 0 59 52" className="h-full w-full">
        <path d="M22 4l14 8-14 9zM38 32l-14 8 14 8z" fill="#5a5a5a" />
        <path d="M24 12h-9q-6 0-6 6v16q0 5 6 7M36 40h9q6 0 6-6V19q0-6-6-7" stroke="#5a5a5a" strokeWidth="6" fill="none" />
      </svg>
    </button>
    <output className={`-mt-px ml-4 h-[54px] w-[199px] shrink-0 rounded-md bg-[#323232] text-center text-[29px] leading-[54px] text-[#d8d8d8] ${numFont}`}>
      -1784|3.119
    </output>
    <div className="ml-4 flex flex-col gap-[11px]">
      <Dropdown label="Time format" value="Bar & Beats" className="h-5 w-[138px]" selectClassName="rounded-lg pl-[22px] text-sm" />
      <Dropdown label="Scroll mode" value="No Scroll" className="h-[21px] w-[138px]" selectClassName="rounded-lg pl-[30px] text-sm" />
    </div>
    <div className="ml-3 flex flex-col gap-[7px]">
      <Dropdown label="Volume" value="Master Volume" className="h-5 w-[138px]" selectClassName="rounded-lg pl-[11px] text-sm" />
      <div className="flex h-[25px] items-end gap-2 pl-[5px]">
        <input aria-label="Master level" defaultValue="0.00 dB" className={`h-[22px] w-[93px] rounded-md bg-[#333] text-center text-base text-[#dcdcdc] ${numFont}`} />
        <button aria-label="Master fader" className="h-[25px] w-7 bg-[#373737]">
          <FaderIcon />
        </button>
      </div>
    </div>
    <button aria-label="Process" className={`ml-3 w-[55px] ${toolButton}`}>
      <svg viewBox="0 0 55 52" className="h-full w-full">
        <circle cx="27.500" cy="26" r="21" fill="#525252" />
        <circle cx="27.500" cy="26" r="23" fill="none" stroke="#525252" strokeWidth="5" strokeDasharray="4 4.030" />
        <g fill="#363636">
          <path d="M24 13q-1-3-5 0-7 5-7 12 0 5 4 4 8-3 9-8z" />
          <path d="M31 13q1-3 5 0 7 5 7 12 0 5-4 4-8-3-9-8z" />
          <path d="M18 38q3-6 10-6t9 6q-3 5-9 5t-10-5z" />
          <circle cx="27.500" cy="26" r="2" />
        </g>
      </svg>
    </button>
    <button aria-label="Cable" className={`ml-[15px] w-[55px] ${toolButton}`}>
      <svg viewBox="0 0 55 52" className="h-full w-full" fill="none">
        <path d="M10 31q-6 7 1 12 7 4 12-3M34 28q5-9 12-3 6 6-4 18" stroke="#777" strokeWidth="2.500" />
        <path d="M31 6L22 16" stroke="#8c8c8c" strokeWidth="6" strokeLinecap="round" />
        <path d="M23 14l-6 7" stroke="#8c8c8c" strokeWidth="8" />
        <path d="M17 20l-7 8" stroke="#9c9c9c" strokeWidth="11" />
        <path d="M22 28l11 11M33 28L22 39" stroke="#f2f2f2" strokeWidth="4" />
      </svg>
    </button>
    <button aria-label="Disable notes" className={`ml-[15px] w-[55px] ${toolButton}`}>
      <svg viewBox="0 0 55 52" className="h-full w-full" fill="none" stroke="#515151">
        <path d="M18 22a11 10 0 1 0 15 12" strokeWidth="6" />
        <path d="M19 23q8-4 13 9" strokeWidth="3" />
        <circle cx="26" cy="15" r="2.500" fill="#515151" />
        <circle cx="38" cy="27" r="2.500" fill="#515151" />
        <path d="M13 10l29 31" strokeWidth="2.500" />
      </svg>
    </button>
    <Dropdown label="Notes" value="All Notes" className="ml-3.5 h-5 w-[208px]" selectClassName="rounded-lg pl-[66px] text-sm" />
    <div className={`mt-[23px] mr-8 ml-auto text-[21px] leading-7 font-bold tracking-[8px] text-white ${boldFont}`}>SYNCHROARTS</div>
  </footer>
);

export default function App() {
  return (
    <div className="flex min-h-screen w-full flex-col border-t-[7px] border-r-2 border-b-2 border-l-[5px] border-t-[#6c6f6c] border-r-[#222] border-b-[#2a2a2a] border-l-[#858885] bg-black">
      <div className="flex flex-1 flex-col border-l-2 border-[#3a3a3a]">
        <div className="flex flex-1">
          <Timeline />
          <div className="mt-[62px] mr-0.5 w-[25px] shrink-0 rounded-md bg-[#232323]" />
          <Sidebar />
        </div>
        <ScrollRow />
        <Toolbar />
      </div>
    </div>
  );
}
